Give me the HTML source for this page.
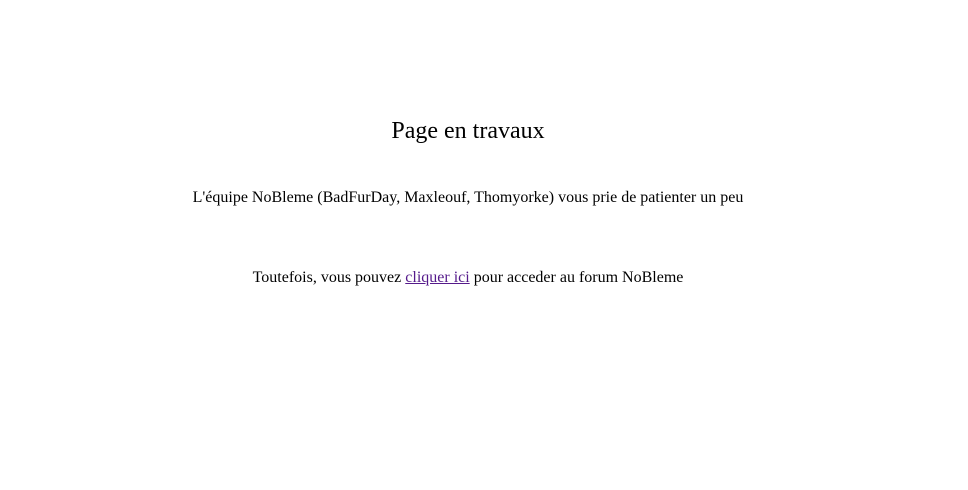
<!DOCTYPE html>
<html><head><meta charset="utf-8"><style>
html,body{margin:0;padding:0;background:#fff;width:968px;height:490px;overflow:hidden}
body{font-family:"Liberation Serif",serif;color:#000;position:relative}
.t{position:absolute;left:0;width:936px;text-align:center;white-space:nowrap}
h1{font-size:24px;font-weight:normal;margin:0}
p{font-size:16px;margin:0}
a{color:#551a8b}
</style></head><body>
<div class="t" style="top:118px"><h1>Page en travaux</h1></div>
<div class="t" style="top:189px"><p>L'équipe NoBleme (BadFurDay, Maxleouf, Thomyorke) vous prie de patienter un peu</p></div>
<div class="t" style="top:269px"><p>Toutefois, vous pouvez <a href="#">cliquer ici</a> pour acceder au forum NoBleme</p></div>
</body></html>
